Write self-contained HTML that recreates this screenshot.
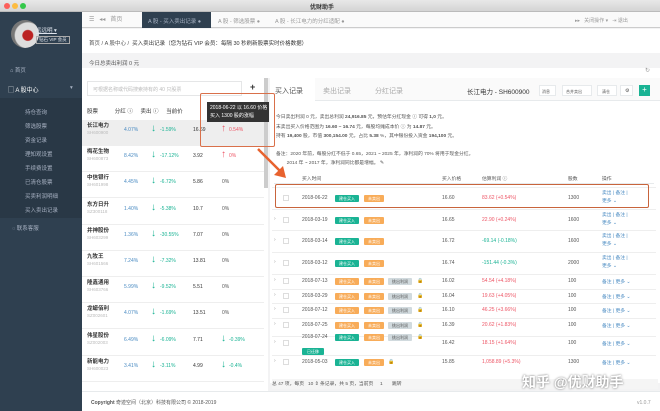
<!DOCTYPE html><html><head><meta charset="utf-8"><style>
*{margin:0;padding:0;box-sizing:border-box}
body{width:660px;height:411px;overflow:hidden;font-family:"Liberation Sans","Noto Sans CJK SC",sans-serif;font-size:6px;color:#555;background:#f3f3f4;position:relative}
.a{position:absolute;white-space:nowrap}
.sb{position:absolute;left:0;top:12px;width:82px;height:399px;background:#2f4050}
.sm{color:#a7b1c2;font-size:5.5px}
.g{color:#1ab394}.r{color:#ed5565}.b{color:#4a8bc2}.gr{color:#999}
.tag{position:absolute;height:7px;font-size:4px;color:#fff;line-height:7px;text-align:center;border-radius:1px}
.cb{position:absolute;width:6px;height:6px;border:1px solid #ddd;background:#fff}
</style></head><body>
<div class="a" style="left:0;top:0;width:660px;height:12px;background:linear-gradient(#e8e8e8,#d4d4d4);border-bottom:1px solid #bbb"></div>
<div class="a" style="left:4px;top:3px;width:6px;height:6px;border-radius:3px;background:#fc605b"></div>
<div class="a" style="left:12px;top:3px;width:6px;height:6px;border-radius:3px;background:#fdbc40"></div>
<div class="a" style="left:20px;top:3px;width:6px;height:6px;border-radius:3px;background:#34c84a"></div>
<div class="a" style="left:310px;top:2px;font-size:6px;color:#333;font-weight:bold">优财助手</div>
<div class="sb"></div>
<div class="a" style="left:0;top:98px;width:82px;height:120px;background:#293846"></div>
<div class="a" style="left:11px;top:20px;width:28px;height:28px;border-radius:14px;background:radial-gradient(circle at 60% 55%,#b22 0 22%,#ddd 26% 55%,#777 60%)"></div>
<div class="a" style="left:36px;top:26px;font-size:5.5px;color:#dfe4ed;text-decoration:underline">远远明 ▾</div>
<div class="a" style="left:36px;top:36px;font-size:4.5px;color:#dfe4ed;border:1px solid #aaa;padding:0 2px;line-height:6px">钻石 VIP 会员</div>
<div class="a sm" style="left:10px;top:66px">⌂ 首页</div>
<div class="a" style="left:8px;top:85px;font-size:6px;color:#fff">▢ A 股中心</div>
<div class="a sm" style="left:70px;top:85px">▾</div>
<div class="a sm" style="left:25px;top:106px;line-height:14px">持仓查询<br>筛选股票<br>资金记录<br>理知观设置<br>手续费设置<br>已清仓股票<br>买卖利润明细<br>买入卖出记录</div>
<div class="a sm" style="left:12px;top:224px">◌ 联系客服</div>
<div class="a" style="left:82px;top:12px;width:578px;height:16px;background:#fafafa;border-bottom:1px solid #ccc"></div>
<div class="a gr" style="left:89px;top:17px;line-height:6px">☰ &nbsp; ◂◂ &nbsp; 首页</div>
<div class="a" style="left:142px;top:12px;width:69px;height:16px;background:#2f4050;color:#a7b1c2;padding:5px 6px;font-size:5.5px">A 股 - 买入卖出记录 ●</div>
<div class="a gr" style="left:218px;top:17px;font-size:5.5px">A 股 - 筛选股票 ●</div>
<div class="a gr" style="left:275px;top:17px;font-size:5.5px">A 股 - 长江电力的分红适配 ●</div>
<div class="a gr" style="left:575px;top:17px;font-size:5px">▸▸ &nbsp; 关闭操作 ▾ &nbsp; ⇥ 退出</div>
<div class="a" style="left:82px;top:29px;width:578px;height:24px;background:#fff"></div>
<div class="a" style="left:89px;top:39px;font-size:5.5px;color:#555">首页 / A 股中心 / &nbsp;<span style="color:#333">买入卖出记录（您为钻石 VIP 会员：每隔 30 秒刷新股票实时价格数据）</span></div>
<div class="a" style="left:89px;top:59px;font-size:5.5px">今日总卖出利润 0 元</div>
<div class="a" style="left:82px;top:68px;width:578px;height:10px;background:#fff"></div>
<div class="a gr" style="left:645px;top:67px;font-size:6px">↻</div>
<div class="a" style="left:82px;top:78px;width:186px;height:313px;background:#fff"></div>
<div class="a" style="left:87px;top:81px;width:155px;height:15px;border:1px solid #e5e6e7;color:#bbb;padding:4px 5px;font-size:5px">可根据名称或代码搜索持有的 40 只股票</div>
<div class="a" style="left:250px;top:82px;font-size:9px;color:#333;font-weight:bold">+</div>
<div class="a" style="left:264px;top:78px;width:4px;height:110px;background:#ccc"></div>
<div class="a" style="left:87px;top:107px;font-size:5.5px;color:#333">股票 &nbsp; &nbsp; &nbsp; &nbsp; &nbsp; 分红 ⓘ &nbsp; &nbsp; 卖出 ⓘ &nbsp; &nbsp; 当前价</div>
<div class="a" style="left:82px;top:120px;width:182px;height:25px;background:#eee"></div>
<div id="L"></div>
<div class="a" style="left:82px;top:391px;width:578px;height:20px;background:#fff;border-top:1px solid #e7eaec"></div>
<div class="a" style="left:91px;top:399px;font-size:5px;color:#555"><b>Copyright</b> 奇迹空间（北京）科技有限公司 © 2018-2019</div>
<div class="a gr" style="left:637px;top:400px;font-size:5px">v1.0.7</div>
<div class="a" style="left:270px;top:78px;width:390px;height:305px;background:#fff"></div>
<div class="a" style="left:270px;top:78px;width:390px;height:23px;background:#fafafa;border-bottom:1px solid #e7eaec"></div>
<div class="a" style="left:270px;top:78px;width:45px;height:24px;background:#fff"></div>
<div class="a" style="left:275px;top:86px;font-size:7px;color:#555">买入记录</div>
<div class="a" style="left:323px;top:86px;font-size:7px;color:#aaa">卖出记录</div>
<div class="a" style="left:375px;top:86px;font-size:7px;color:#aaa">分红记录</div>
<div class="a" style="left:467px;top:86px;font-size:6.5px;color:#333">长江电力 - SH600900</div>
<div class="a" style="left:539px;top:85px;width:17px;height:11px;border:1px solid #e7eaec;background:#fff;font-size:4px;padding:3px 2px">消息</div>
<div class="a" style="left:562px;top:85px;width:30px;height:11px;border:1px solid #e7eaec;background:#fff;font-size:4px;padding:3px 3px">合并卖出</div>
<div class="a" style="left:597px;top:85px;width:20px;height:11px;border:1px solid #e7eaec;background:#fff;font-size:4px;padding:3px 4px">清仓</div>
<div class="a" style="left:620px;top:85px;width:13px;height:11px;border:1px solid #e7eaec;background:#fff;font-size:5px;padding:2px 4px">⚙</div>
<div class="a" style="left:639px;top:85px;width:11px;height:11px;background:#1ab394;color:#fff;font-size:8px;line-height:10px;text-align:center">+</div>
<div class="a" style="left:276px;top:113px;font-size:4.8px;line-height:9.5px;color:#555">今日卖出利润 0 元，卖出总利润 <b>24,916.85</b> 元，预估年分红现金 ⓘ 可得 <b>1,0</b> 元。<br>末卖出买入价格范围为 <b>16.60 ~ 16.74</b> 元，每股均摊成本价 ⓘ 为 <b>14.87</b> 元。<br>持有 <b>19,400</b> 股，市值 <b>300,154.00</b> 元，占比 <b>5.38</b> %，其中银份投入资金 <b>194,100</b> 元。</div>
<div class="a" style="left:276px;top:150px;font-size:4.8px;line-height:9px">备注：2020 年前，每股分红不低于 0.65，2021 ~ 2025 年，净利润的 70% 将用于现金分红。<br>&nbsp; &nbsp; &nbsp; &nbsp; 2014 年 ~ 2017 年，净利润同比都是增幅。 ✎</div>
<div class="a" style="left:274px;top:172px;width:380px;height:12px;border-bottom:1px solid #e7eaec"></div>
<div class="a" style="left:302px;top:175px;font-size:4.8px;color:#555">买入时间</div>
<div class="a" style="left:442px;top:175px;font-size:4.8px">买入价格</div>
<div class="a" style="left:482px;top:175px;font-size:4.8px">估算利润 ⓘ</div>
<div class="a" style="left:568px;top:175px;font-size:4.8px">股数</div>
<div class="a" style="left:602px;top:175px;font-size:4.8px">操作</div>
<div id="R"></div>
<div class="a" style="left:272px;top:379px;width:386px;height:10px;background:#f5f5f5"></div>
<div class="a" style="left:272px;top:380px;font-size:4.8px;color:#555">总 47 项，每页 &nbsp; 10 ⇕ 条记录，共 5 页，当前页 &nbsp; &nbsp; 1 &nbsp; &nbsp; &nbsp; 跳转</div>
<div class="a" style="left:522px;top:372px;font-size:14px;color:#fff;text-shadow:0 0 2px #666;font-weight:bold">知乎 @优财助手</div>
<div class="a" style="left:275px;top:184px;width:374px;height:24px;border:1px solid #c8643c;border-radius:2px"></div>
<div class="a" style="left:200px;top:93px;width:75px;height:54px;border:1px solid #d9704a;border-radius:2px"></div>
<div class="a" style="left:207px;top:102px;width:62px;height:20px;background:#333;color:#fff;font-size:5px;line-height:8px;padding:2px 3px">2018-06-22 以 16.60 价格<br>买入 1300 股的涨幅</div>
<svg class="a" style="left:250px;top:145px" width="40" height="40"><line x1="8" y1="4" x2="30" y2="26" stroke="#e8622e" stroke-width="2.5"/><polygon points="36,33 24,30 33,21" fill="#e8622e"/></svg>
<script>
var L=[["长江电力","SH600900","4.07%","-1.59%","16.69","0.54%","r","↑"],["梅花生物","SH600873","8.42%","-17.12%","3.92","0%","r","↑"],["中信银行","SH601998","4.45%","-6.72%","5.86","0%","",""],["东方日升","SZ300118","1.40%","-5.38%","10.7","0%","",""],["井神股份","SH603299","1.36%","-30.55%","7.07","0%","",""],["九牧王","SH601566","7.24%","-7.32%","13.81","0%","",""],["隆鑫通用","SH603766","5.99%","-9.52%","5.51","0%","",""],["龙蟒佰利","SZ002601","4.07%","-1.69%","13.51","0%","",""],["伟星股份","SZ002003","6.49%","-6.09%","7.71","-0.39%","g","↓"],["新能电力","SH600023","3.41%","-3.11%","4.99","-0.4%","g","↓"]];
var h="";L.forEach(function(r,i){var y=121+i*26.2;
h+='<div class="a" style="left:87px;top:'+y+'px;font-size:5.5px;color:#333;font-weight:bold">'+r[0]+'</div><div class="a" style="left:87px;top:'+(y+9)+'px;font-size:4.5px;color:#bbb">'+r[1]+'</div><div class="a b" style="left:124px;top:'+(y+6)+'px;font-size:5px">'+r[2]+'</div><div class="a g" style="left:151px;top:'+(y+2)+'px;font-size:10px;font-weight:bold">↓</div><div class="a g" style="left:160px;top:'+(y+6)+'px;font-size:5px">'+r[3]+'</div><div class="a" style="left:193px;top:'+(y+6)+'px;font-size:5px;color:#333">'+r[4]+'</div>';
if(r[7])h+='<div class="a '+r[6]+'" style="left:221px;top:'+(y+2)+'px;font-size:10px;font-weight:bold">'+r[7]+'</div>';
h+='<div class="a '+r[6]+'" style="left:'+(r[7]?229:222)+'px;top:'+(y+6)+'px;font-size:5px">'+r[5]+'</div><div class="a" style="left:82px;top:'+(y+24)+'px;width:182px;height:1px;background:#eee"></div>';});
document.getElementById("L").innerHTML=h;
var R=[["2018-06-22",198,"16.60","83.62 (+0.54%)","r","1300",1,1],["2018-03-19",220,"16.65","22.90 (+0.24%)","r","1600",1,1],["2018-03-14",241,"16.72","-69.14 (-0.18%)","g","1600",1,1],["2018-03-12",263,"16.74","-151.44 (-0.3%)","g","2000",1,1],["2018-07-13",281,"16.02","54.54 (+4.18%)","r","100",0,0],["2018-03-29",296,"16.04","19.63 (+4.05%)","r","100",0,0],["2018-07-12",310,"16.10","46.25 (+3.66%)","r","100",0,0],["2018-07-25",325,"16.39","20.62 (+1.83%)","r","100",0,0],["2018-07-24",343,"16.42","18.15 (+1.64%)","r","100",2,0],["2018-05-03",362,"15.85","1,058.89 (+5.3%)","r","1300",3,0]];
h="";R.forEach(function(r,i){var c=r[1];
h+='<div class="a" style="left:272px;top:'+(c-(r[7]?11:7))+'px;width:384px;height:1px;background:#eee"></div>';
if(i>0)h+='<div class="a gr" style="left:274px;top:'+(c-4)+'px;font-size:5px">›</div>';
var cy=(i==8)?c-6:c;
h+='<div class="cb" style="left:283px;top:'+(c-3)+'px"></div><div class="a" style="left:302px;top:'+(cy-3)+'px;font-size:5px;color:#555">'+r[0]+'</div>';
var g=(r[6]==0)?"#f8ac59":"#1ab394";
h+='<div class="tag" style="left:335px;top:'+(cy-3)+'px;width:24px;background:'+g+'">建仓买入</div><div class="tag" style="left:364px;top:'+(cy-3)+'px;width:20px;background:#f8ac59">未卖出</div>';
if(r[6]==0||r[6]==2)h+='<div class="tag" style="left:388px;top:'+(cy-3)+'px;width:24px;background:#d1dade;color:#555">挑出利润</div><div class="a" style="left:417px;top:'+(cy-3)+'px;font-size:5px;color:#1ab394">🔒</div>';
if(r[6]==3)h+='<div class="a" style="left:388px;top:'+(cy-3)+'px;font-size:5px;color:#1ab394">🔒</div>';
if(r[6]==2)h+='<div class="tag" style="left:302px;top:'+(c+5)+'px;width:22px;background:#1ab394">已迁移</div>';
h+='<div class="a" style="left:442px;top:'+(c-3)+'px;font-size:5px">'+r[2]+'</div><div class="a '+r[4]+'" style="left:482px;top:'+(c-3)+'px;font-size:5px">'+r[3]+'</div><div class="a" style="left:568px;top:'+(c-3)+'px;font-size:5px">'+r[5]+'</div>';
if(r[7])h+='<div class="a b" style="left:602px;top:'+(c-8)+'px;font-size:4.8px;line-height:8px">卖出 | 备注 |<br>更多 ⌄</div>';
else h+='<div class="a b" style="left:602px;top:'+(c-3)+'px;font-size:4.8px">备注 | 更多 ⌄</div>';});
document.getElementById("R").innerHTML=h;
</script>
</body></html>
